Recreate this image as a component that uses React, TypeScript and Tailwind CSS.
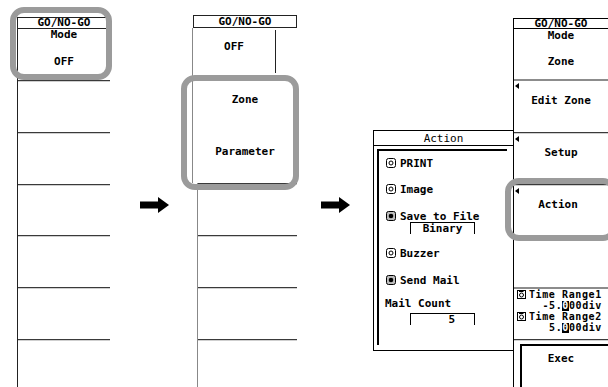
import React from "react";

// Divider between soft-key cells: dark line with a light shadow under it
const Rule = ({ gray = false }: { gray?: boolean }) => (
  <div className={gray ? "h-[2px] shrink-0 bg-[#8c8c8c]" : "h-[2px] shrink-0 border-t border-[#3a3a3a] bg-[#cfcfcf]"} />
);

// Radio-ish option box used in the Action dialog
const OptIcon = ({ on = false }: { on?: boolean }) => (
  <svg width="10" height="10" viewBox="0 0 10 10" className="shrink-0">
    <rect x="0.5" y="0.5" width="9" height="9" rx="2" fill={on ? "#bdbdbd" : "#fff"} stroke="#000" />
    {on ? (
      <circle cx="5" cy="5" r="2.3" fill="#000" />
    ) : (
      <circle cx="5" cy="5" r="2" fill="none" stroke="#000" />
    )}
  </svg>
);

// Small icon in front of "Time Range"
const RangeIcon = () => (
  <svg width="9" height="9" viewBox="0 0 9 9" className="shrink-0">
    <rect x="0.5" y="0.5" width="8" height="8" fill="#fff" stroke="#000" />
    <circle cx="4.5" cy="5" r="2" fill="none" stroke="#000" />
    <path d="M2 1.5 L6.5 1.5" stroke="#000" />
  </svg>
);

const Arrow = () => (
  <svg width="29" height="16" viewBox="0 0 29 16">
    <path d="M0 4.5 H18 V0 L29 8 L18 16 V11.5 H0 Z" fill="#000" />
  </svg>
);

const Tri = () => (
  <div className="w-0 h-0 ml-[1px] mt-[2px] border-y-[3.5px] border-y-transparent border-r-[4px] border-r-black" />
);

// Gray rounded highlight drawn over a group of keys
const Highlight = ({ className }: { className: string }) => (
  <div className={`absolute border-[6px] border-[#9b9b9b] rounded-[14px] pointer-events-none ${className}`} />
);

const Option = ({ on, label, className = "" }: { on?: boolean; label: string; className?: string }) => (
  <div className={`h-[12px] flex items-center gap-[4px] ${className}`}>
    <OptIcon on={on} />
    <span className="whitespace-pre">{label}</span>
  </div>
);

export default function App() {
  return (
    <div className="w-[608px] h-[387px] overflow-hidden bg-white flex items-start font-[family-name:DejaVu_Sans_Mono,monospace] text-[11px] font-bold leading-none text-black">
      {/* Step 1: menu with Mode OFF */}
      <div className="relative w-[110px] h-[387px] shrink-0">
        <div className="ml-[17px] mt-[17px] h-[370px] border-l border-[#222] flex flex-col">
          <div className="h-[12px] shrink-0 border-y border-[#222] flex items-center justify-center leading-[10px]">GO/NO-GO</div>
          <div className="h-[51px] shrink-0 flex flex-col items-center">
            <span>Mode</span>
            <span className="mt-[16px]">OFF</span>
          </div>
          {[52, 52, 51, 52, 52, 51].map((h, i) => (
            <div key={i} className="shrink-0 flex flex-col" style={{ height: h }}>
              <Rule />
            </div>
          ))}
        </div>
        <Highlight className="left-[10px] top-[7px] w-[102px] h-[73px]" />
      </div>

      {/* arrow */}
      <div className="w-[82px] shrink-0 pt-[197px] pl-[30px]">
        <Arrow />
      </div>

      {/* Step 2: mode choices */}
      <div className="relative w-[105px] h-[387px] shrink-0">
        <div className="mt-[15px] ml-[1px] h-[13px] border border-[#222] flex items-center justify-center">GO/NO-GO</div>
        <div className="border-l border-[#888] flex flex-col">
          <div className="h-[52px] flex">
            <div className="flex-1 flex justify-center">
              <span className="mt-[13px]">OFF</span>
            </div>
            <div className="w-[1px] mt-[2px] mb-[7px] mr-[21px] bg-[#222]" />
          </div>
          <div className="h-[50px] flex flex-col items-center">
            <Rule />
            <span className="mt-[12px]">Zone</span>
          </div>
          <div className="h-[53px] flex flex-col items-center">
            <Rule />
            <span className="mt-[14px]">Parameter</span>
          </div>
        </div>
        <div className="ml-[5px] border-l border-[#888] flex flex-col">
          {[52, 52, 52, 48].map((h, i) => (
            <div key={i} className="shrink-0 flex flex-col" style={{ height: h }}>
              <Rule />
            </div>
          ))}
        </div>
        <Highlight className="left-[-11px] top-[75px] w-[118px] h-[115px]" />
      </div>

      {/* arrow */}
      <div className="w-[76px] shrink-0 pt-[197px] pl-[24px]">
        <Arrow />
      </div>

      {/* Step 3: Action dialog */}
      <div className="mt-[130px] w-[140px] h-[221px] shrink-0 border-l border-y border-black flex flex-col">
        <div className="h-[15px] shrink-0 border-b border-black flex items-center justify-center font-normal">Action</div>
        <div className="ml-[3px] mt-[3px] mr-[6px] mb-[5px] flex-1 border-t-2 border-l-2 border-black flex flex-col pl-[7px]">
          <Option label="PRINT" className="mt-[6px]" />
          <Option label="Image" className="mt-[14px]" />
          <Option on label="Save to File" className="mt-[15px]" />
          <div className="ml-[24px] w-[65px] h-[12px] border-t border-x border-black flex items-center justify-center">Binary</div>
          <Option label="Buzzer" className="mt-[13px]" />
          <Option on label="Send Mail" className="mt-[15px]" />
          <div className="-ml-[1px] mt-[11px] h-[12px] flex items-center">Mail Count</div>
          <div className="ml-[24px] mt-[4px] w-[65px] h-[12px] border-t border-x border-black flex items-center justify-end pr-[19px]">5</div>
        </div>
      </div>

      {/* Step 4: full GO/NO-GO menu */}
      <div className="relative w-[95px] h-[387px] shrink-0">
        <div className="mt-[18px] h-[369px] border-l border-black flex flex-col">
          <div className="h-[11px] shrink-0 border-y border-black flex items-center justify-center leading-[9px]">GO/NO-GO</div>
          <div className="h-[50px] shrink-0 flex flex-col items-center">
            <span className="mt-[1px]">Mode</span>
            <span className="mt-[15px]">Zone</span>
          </div>
          <Rule gray />
          <div className="h-[51px] shrink-0 flex flex-col">
            <Tri />
            <span className="self-center mt-[6px]">Edit Zone</span>
          </div>
          <div className="h-[52px] shrink-0 flex flex-col">
            <Rule />
            <Tri />
            <span className="self-center mt-[5px]">Setup</span>
          </div>
          <div className="h-[52px] shrink-0 flex flex-col">
            <Rule />
            <Tri />
            <span className="self-center mt-[5px] -ml-[6px]">Action</span>
          </div>
          <div className="h-[51px] shrink-0 flex flex-col">
            <Rule />
          </div>
          <Rule gray />
          <div className="h-[50px] shrink-0 flex flex-col pr-[6px] text-[10px] tracking-[0.6px]">
            <div className="h-[11px] flex items-center gap-[3px] pl-[3px]">
              <RangeIcon />
              <span className="whitespace-pre">Time Range1</span>
            </div>
            <div className="h-[11px] flex items-center justify-end">
              -5.<span className="bg-black text-white">0</span>00div
            </div>
            <div className="h-[11px] flex items-center gap-[3px] pl-[3px]">
              <RangeIcon />
              <span className="whitespace-pre">Time Range2</span>
            </div>
            <div className="h-[11px] flex items-center justify-end">
              5.<span className="bg-black text-white">0</span>00div
            </div>
          </div>
          <Rule />
          <div className="ml-[6px] mt-[3px] flex-1 border-t-2 border-l-2 border-black flex justify-center pr-[8px]">
            <span className="mt-[7px]">Exec</span>
          </div>
        </div>
        <Highlight className="left-[-8px] top-[178px] w-[112px] h-[63px]" />
      </div>
    </div>
  );
}
